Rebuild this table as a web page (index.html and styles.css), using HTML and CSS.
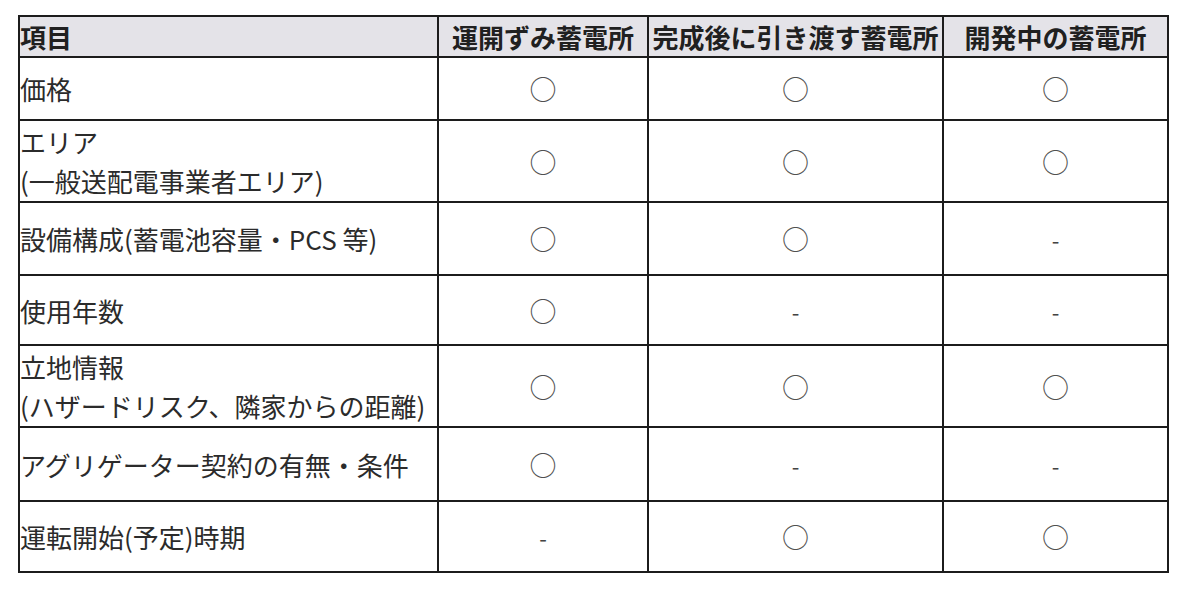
FILE: index.html
```html
<!DOCTYPE html>
<html lang="ja">
<head>
<meta charset="utf-8">
<title>蓄電所比較</title>
<link rel="stylesheet" href="styles.css">
</head>
<body>
<table class="cmp">
  <colgroup>
    <col class="c-item">
    <col class="c-a">
    <col class="c-b">
    <col class="c-c">
  </colgroup>
  <thead>
    <tr class="r-head">
      <th class="item">項目</th>
      <th>運開ずみ蓄電所</th>
      <th>完成後に引き渡す蓄電所</th>
      <th>開発中の蓄電所</th>
    </tr>
  </thead>
  <tbody>
    <tr class="r1">
      <td class="item">価格</td>
      <td><span class="ok">○</span></td>
      <td><span class="ok">○</span></td>
      <td><span class="ok">○</span></td>
    </tr>
    <tr class="r2">
      <td class="item">エリア<br>(一般送配電事業者エリア)</td>
      <td><span class="ok">○</span></td>
      <td><span class="ok">○</span></td>
      <td><span class="ok">○</span></td>
    </tr>
    <tr class="r3">
      <td class="item">設備構成(蓄電池容量・PCS 等)</td>
      <td><span class="ok">○</span></td>
      <td><span class="ok">○</span></td>
      <td><span class="na">-</span></td>
    </tr>
    <tr class="r4">
      <td class="item">使用年数</td>
      <td><span class="ok">○</span></td>
      <td><span class="na">-</span></td>
      <td><span class="na">-</span></td>
    </tr>
    <tr class="r5">
      <td class="item">立地情報<br>(ハザードリスク、隣家からの距離)</td>
      <td><span class="ok">○</span></td>
      <td><span class="ok">○</span></td>
      <td><span class="ok">○</span></td>
    </tr>
    <tr class="r6">
      <td class="item">アグリゲーター契約の有無・条件</td>
      <td><span class="ok">○</span></td>
      <td><span class="na">-</span></td>
      <td><span class="na">-</span></td>
    </tr>
    <tr class="r7">
      <td class="item">運転開始(予定)時期</td>
      <td><span class="na">-</span></td>
      <td><span class="ok">○</span></td>
      <td><span class="ok">○</span></td>
    </tr>
  </tbody>
</table>
</body>
</html>
```

FILE: styles.css
```css
html, body {
  margin: 0;
  padding: 0;
  background: #ffffff;
}

body {
  font-family: "Noto Sans CJK JP", "Noto Sans", sans-serif;
  color: #2b2b2b;
}

.cmp {
  margin: 15px 0 0 18px;
  width: 1149px;
  table-layout: fixed;
  border-collapse: collapse;
  font-size: 26px;
  line-height: 39px;
}

.c-item { width: 419px; }
.c-a { width: 210px; }
.c-b { width: 295px; }
.c-c { width: 225px; }

.cmp th,
.cmp td {
  border: 2px solid #1c1c1c;
  padding: 0 1px;
  text-align: center;
  vertical-align: middle;
  white-space: nowrap;
  overflow: hidden;
}

.cmp th {
  background: #e4e3e8;
  font-weight: 700;
  color: #202020;
}

.cmp .item {
  text-align: left;
  padding-left: 0;
}

.r-head { height: 41px; }
.r1 { height: 63px; }
.r2 { height: 82px; }
.r3 { height: 73px; }
.r4 { height: 70px; }
.r5 { height: 82px; }
.r6 { height: 74px; }
.r7 { height: 71px; }

.ok {
  color: #505050;
  font-size: 27px;
}

.na {
  color: #444444;
  font-size: 22px;
}
```
